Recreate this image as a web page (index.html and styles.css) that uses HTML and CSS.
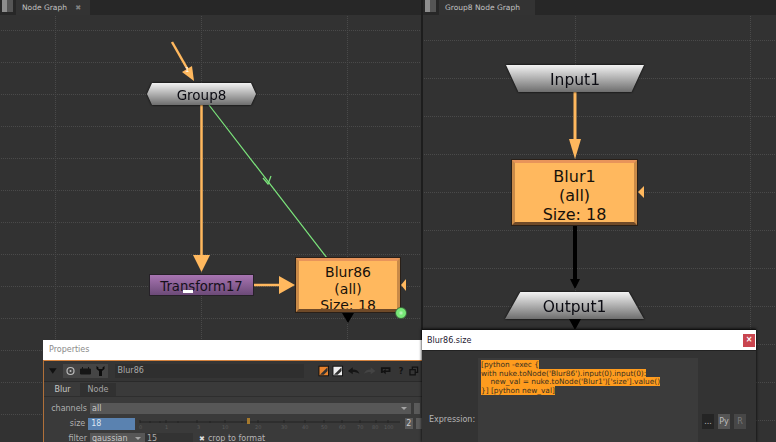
FILE: index.html
```html
<!DOCTYPE html>
<html lang="en">
<head>
  <meta charset="UTF-8">
  <title>Node Graph</title>
  <link rel="stylesheet" href="styles.css">
</head>
<body>
  <div class="app">

    <!-- Left graph -->
    <section class="pane pane-left">
      <div class="tabbar">
        <span class="pane-icon"></span>
        <div class="tab">Node Graph <span class="tab-x">✖</span></div>
      </div>
      <div class="canvas">
        <svg class="wires" viewBox="0 15 421 427">
          <defs>
            <pattern id="grid-left" width="146" height="32" patternUnits="userSpaceOnUse" x="55" y="30">
              <path d="M0 .5H146M.5 0V32" class="grid-line"/>
            </pattern>
          </defs>
          <rect x="0" y="15" width="421" height="427" fill="url(#grid-left)"/>
          <path d="M172 42L188 70" class="wire"/>
          <path d="M194 81L182 72L192 66Z" class="head"/>
          <text x="185" y="72" class="arrow-num">1</text>
          <path d="M201.500 105V258M254 285H282" class="wire"/>
          <path d="M193 255H210L201.500 272Z M279 276V294L295 285Z" class="head"/>
          <path d="M209 105L327 258" class="green"/>
          <path d="M263 178L268 184L271 176" class="green"/>
          <path d="M401 285L406 279V291Z" class="head"/>
          <path d="M342 313H354L348 323Z" class="black"/>
        </svg>
        <div class="node-shape shape-group8"><div class="shape-fill">Group8</div></div>
        <div class="node-flat node-transform">Transform17<span class="cursor-mark"></span></div>
        <div class="node-box node-blur86">Blur86<br>(all)<br>Size: 18</div>
        <div class="port-dot"></div>
      </div>
    </section>

    <!-- Right graph -->
    <section class="pane pane-right">
      <div class="tabbar">
        <span class="pane-icon"></span>
        <div class="tab tab-wide">Group8 Node Graph</div>
      </div>
      <div class="canvas">
        <svg class="wires" viewBox="423 15 353 427">
          <defs>
            <pattern id="grid-right" width="175" height="38" patternUnits="userSpaceOnUse" x="575" y="78">
              <path d="M0 .5H175M.5 0V38" class="grid-line"/>
            </pattern>
          </defs>
          <rect x="423" y="15" width="353" height="427" fill="url(#grid-right)"/>
          <path d="M575 92V142" class="wire wire-thick"/>
          <path d="M569 139H581L575 159Z" class="head"/>
          <path d="M575 225V282" class="wire-black"/>
          <path d="M570 279H580L575 289Z M569 319H581L575 330Z" class="black"/>
          <path d="M638 192L644 186V198Z" class="head"/>
        </svg>
        <div class="node-shape shape-input"><div class="shape-fill">Input1</div></div>
        <div class="node-box node-blur1">Blur1<br>(all)<br>Size: 18</div>
        <div class="node-shape shape-output"><div class="shape-fill">Output1</div></div>
      </div>
    </section>
  </div>

  <!-- Properties window -->
  <div class="win win-props">
    <div class="win-title">Properties</div>
    <div class="props-body">
      <div class="toolbar">
        <svg class="tool-ic" width="10" height="8" viewBox="0 0 10 8"><path d="M1 1H9L5 7Z" fill="#111"/></svg>
        <div class="tool-group">
          <svg width="14" height="14" viewBox="0 0 14 14"><circle cx="7" cy="7" r="3.500" fill="none" stroke="#bbb" stroke-width="1.200"/><circle cx="7" cy="7" r="1" fill="#bbb"/></svg>
          <svg width="14" height="14" viewBox="0 0 14 14"><path d="M2 5H12V10H2ZM4 3V5M10 3V5" fill="#161616" stroke="#161616"/></svg>
          <svg width="14" height="14" viewBox="0 0 14 14"><path d="M3 2V5L5.500 7V12H8.500V7L11 5V2L9 3.500V5H5V3.500Z" fill="#0c0c0c"/></svg>
        </div>
        <div class="name-field">Blur86</div>
        <svg width="12" height="12" viewBox="0 0 12 12"><rect x="1" y="1" width="10" height="10" fill="#e8832e" stroke="#111"/><path d="M2 10L10 2V6L6 10Z" fill="#333"/></svg>
        <svg width="12" height="12" viewBox="0 0 12 12"><rect x="1" y="1" width="10" height="10" fill="#eee" stroke="#111"/><path d="M2 10L10 2V6L6 10Z" fill="#333"/></svg>
        <svg width="14" height="12" viewBox="0 0 14 12"><path d="M1 6L6 2V4.500C10 4.500 12 6 13 9C11 7.500 9 7 6 7V9.500Z" fill="#151515"/></svg>
        <svg width="14" height="12" viewBox="0 0 14 12"><path d="M13 6L8 2V4.500C4 4.500 2 6 1 9C3 7.500 5 7 8 7V9.500Z" fill="#444"/></svg>
        <svg width="14" height="12" viewBox="0 0 14 12"><path d="M2 2H12V7H7V9.500L3.500 6.500L7 4V5.500H10V4H4V8H2Z" fill="#111"/></svg>
        <span class="tool-help">?</span>
        <svg width="10" height="10" viewBox="0 0 10 10"><path d="M1 3.500H6.500V9H1ZM3.500 3V1H9V6.500H7" fill="none" stroke="#111" stroke-width="1.300"/></svg>
      </div>

      <div class="prop-tabs">
        <div class="prop-tab prop-tab-on">Blur</div>
        <div class="prop-tab">Node</div>
      </div>

      <div class="knobs">
        <div class="knob">
          <label>channels</label>
          <div class="dropdown dropdown-long">all<span class="caret"></span></div>
          <div class="mini-btn mini-cut"></div>
        </div>
        <div class="knob">
          <label>size</label>
          <div class="size-input">18</div>
          <svg class="slider" width="263" height="12" viewBox="0 0 263 12">
            <path d="M2 4H262" stroke="#232323"/>
            <path d="M2 2V5M12 3V5M22 3V5M28 2V5M40 3V5M59 2V5M72 3V5M87 2V5M104 3V5M120 2V5M146 2V5M167 2V5M186 2V5M204 2V5M222 2V5M238 2V5M250 2V5" stroke="#232323"/>
            <g class="slider-nums">
              <text x="1" y="11">0</text><text x="27" y="11">1</text><text x="59" y="11">3</text>
              <text x="84" y="11">10</text><text x="117" y="11">20</text><text x="143" y="11">30</text>
              <text x="164" y="11">40</text><text x="183" y="11">50</text><text x="201" y="11">60</text>
              <text x="219" y="11">70</text><text x="234" y="11">80</text><text x="246" y="11">100</text>
            </g>
            <rect x="109" y="0" width="3" height="6" fill="#a5792d"/>
          </svg>
          <div class="mini-btn">2</div>
          <div class="mini-btn mini-cut"></div>
        </div>
        <div class="knob">
          <label>filter</label>
          <div class="dropdown dropdown-short">gaussian<span class="caret"></span></div>
          <div class="num-input">15</div>
          <span class="check">✖</span>
          <span class="check-label">crop to format</span>
        </div>
      </div>
    </div>
  </div>

  <!-- Expression window -->
  <div class="win win-expr">
    <div class="win-title win-title-dark">
      Blur86.size
      <span class="close-btn">×</span>
    </div>
    <div class="expr-body">
      <label class="expr-label">Expression:</label>
      <div class="expr-area">
        <div><span class="sel">[python -exec {</span></div>
        <div><span class="sel">with nuke.toNode('Blur86').input(0).input(0):</span></div>
        <div><span class="sel">    new_val = nuke.toNode('Blur1')['size'].value()</span></div>
        <div><span class="sel">}] [python new_val]</span></div>
      </div>
      <div class="expr-btns">
        <div class="expr-btn expr-btn-dark">...</div>
        <div class="expr-btn">Py</div>
        <div class="expr-btn expr-btn-dim">R</div>
      </div>
    </div>
  </div>
</body>
</html>
```

FILE: styles.css
```css
* {
  box-sizing: border-box;
}

html, body {
  margin: 0;
  height: 100%;
}

body {
  width: 776px;
  height: 442px;
  overflow: hidden;
  position: relative;
  background: #1d1d1d;
  font-family: "DejaVu Sans", sans-serif;
  font-size: 8px;
}

.app {
  display: flex;
  height: 442px;
  gap: 2px;
}

.pane {
  display: flex;
  flex-direction: column;
}

.pane-left {
  width: 421px;
}

.pane-right {
  width: 353px;
}

.tabbar {
  height: 15px;
  display: flex;
  align-items: stretch;
  background: #272727;
  gap: 3px;
}

.pane-icon {
  width: 11px;
  height: 12px;
  margin-left: 2px;
  background: linear-gradient(to right, #8d8d8d 50%, #555 50%);
}

.tab {
  width: 74px;
  padding: 3px 0 0 6px;
  background: #333;
  color: #c2c2c2;
  font-size: 7.500px;
  white-space: nowrap;
}

.tab-x {
  margin-left: 6px;
  font-size: 7px;
  color: #808080;
}

.tab-wide {
  width: 96px;
}

.canvas {
  flex: 1;
  position: relative;
  background: #323232;
}

.wires {
  position: absolute;
  left: 0;
  top: 0;
  width: 100%;
  height: 100%;
}

.grid-line {
  stroke: #4a4a4a;
  stroke-width: 1;
  stroke-dasharray: 1 1;
  fill: none;
}

.wire {
  stroke: #ffb85e;
  stroke-width: 2.500;
  fill: none;
}

.wire-thick {
  stroke-width: 3;
}

.wire-black {
  stroke: #000;
  stroke-width: 4;
  fill: none;
}

.head {
  fill: #ffb85e;
}

.black {
  fill: #000;
}

.green {
  stroke: #7ce67c;
  stroke-width: 1.200;
  fill: none;
}

.arrow-num {
  font-size: 7px;
  fill: #fff;
}

.port-dot {
  position: absolute;
  left: 394.500px;
  top: 292px;
  width: 12px;
  height: 12px;
  border-radius: 50%;
  background: radial-gradient(circle, #c8f5c8 0, #78e878 35%);
  border: 1px solid #3d6a3d;
}

/* nodes */
.node-shape {
  position: absolute;
  filter: drop-shadow(0 0 1px #000);
}

.shape-fill {
  height: 100%;
  padding-top: 2px;
  display: flex;
  align-items: center;
  justify-content: center;
  background: linear-gradient(to bottom, #f2f2f2, #6e6e6e);
  color: #0b0b12;
}

.shape-group8 {
  left: 147px;
  top: 68px;
  width: 109px;
  height: 22px;
  font-size: 13.500px;
}

.shape-group8 .shape-fill {
  clip-path: polygon(5px 0, calc(100% - 5px) 0, 100% 50%, calc(100% - 5px) 100%, 5px 100%, 0 50%);
}

.shape-input {
  left: 83px;
  top: 50px;
  width: 138px;
  height: 27px;
  font-size: 15.500px;
}

.shape-input .shape-fill {
  clip-path: polygon(0 0, 100% 0, 91% 100%, 9% 100%);
}

.shape-output {
  left: 82px;
  top: 277px;
  width: 139px;
  height: 27px;
  font-size: 15.500px;
}

.shape-output .shape-fill {
  clip-path: polygon(11% 0, 89% 0, 100% 100%, 0 100%);
}

.node-flat {
  position: absolute;
  left: 149px;
  top: 259px;
  width: 105px;
  height: 22px;
  padding-top: 2px;
  display: flex;
  align-items: center;
  justify-content: center;
  border: 1px solid #262128;
  background: linear-gradient(to bottom, #a875b2, #6c4a78);
  color: #15101a;
  font-size: 13.200px;
}

.cursor-mark {
  position: absolute;
  left: 33px;
  top: 15px;
  width: 10px;
  height: 3px;
  background: #fff;
}

.node-box {
  position: absolute;
  overflow: hidden;
  text-align: center;
  background: #ffb85e;
  color: #17110a;
  border: 3px solid #ffb85e;
  border-top-color: #e8945a;
  border-bottom-color: #704a28;
  border-left-color: #c98a48;
  border-right-color: #c98a48;
  outline: 1px solid #2a2018;
}

.node-blur86 {
  left: 296px;
  top: 243px;
  width: 104px;
  height: 54px;
  padding-top: 3px;
  font-size: 14px;
  line-height: 16.500px;
}

.node-blur1 {
  left: 89px;
  top: 145px;
  width: 125px;
  height: 65px;
  padding-top: 4px;
  font-size: 16px;
  line-height: 19px;
}

/* floating windows */
.win {
  position: absolute;
  overflow: hidden;
}

.win-title {
  height: 20px;
  padding: 5px 6px;
  background: #fff;
  color: #8a8a8a;
}

.win-props {
  left: 43px;
  top: 340px;
  width: 379px;
  height: 102px;
}

.props-body {
  height: 82px;
  background: #3a3a3a;
  border-top: 1px solid #d5833e;
  border-left: 1px solid #b0703a;
  color: #b4b4b4;
}

.toolbar {
  height: 21px;
  padding: 0 3px 0 4px;
  display: flex;
  align-items: center;
  gap: 3px;
  background: #353535;
  border-bottom: 1px solid #2a2a2a;
}

.tool-group {
  display: flex;
  margin: 0 4px 0 2px;
  background: #454545;
}

.tool-group svg {
  width: 15px;
}

.name-field {
  width: 197px;
  height: 14px;
  margin-right: 11px;
  padding: 2px 3px;
  background: #2f2f2f;
  color: #a9a9a9;
}

.tool-help {
  margin: 0 3px 0 3px;
  color: #111;
  font-weight: bold;
}

.prop-tabs {
  display: flex;
  height: 15px;
  padding: 1px 0 0 3px;
  border-bottom: 1px solid #2e2e2e;
}

.prop-tab {
  width: 31px;
  padding-top: 2px;
  text-align: center;
  background: #313131;
  color: #a5a5a5;
}

.prop-tab-on {
  background: #3a3a3a;
  color: #c8c8c8;
}

.prop-tab + .prop-tab {
  margin-left: 2px;
  width: 36px;
}

.knobs {
  display: flex;
  flex-direction: column;
  gap: 4px;
  padding-top: 6px;
}

.knob {
  display: flex;
  align-items: center;
  gap: 3px;
  height: 11px;
}

.knob label {
  width: 43px;
  text-align: right;
  color: #b0b0b0;
}

.dropdown {
  position: relative;
  height: 11px;
  padding: 0 2px;
  line-height: 11px;
  background: #575757;
  color: #c8c8c8;
}

.dropdown-long {
  width: 321px;
}

.dropdown-short {
  width: 55px;
}

.caret {
  position: absolute;
  right: 4px;
  top: 4px;
  border: 3px solid transparent;
  border-top-color: #a5a5a5;
}

.mini-btn {
  width: 9px;
  height: 11px;
  text-align: center;
  line-height: 11px;
  background: #5a5a5a;
  color: #ccc;
}

.mini-cut {
  width: 6px;
}

.size-input {
  width: 48px;
  height: 12px;
  padding: 1px 3px;
  background: #5a82b0;
  color: #dce6f2;
}

.slider {
  flex: none;
  margin: 0 1px 0 0;
}

.slider-nums text {
  font-size: 5px;
  fill: #5c5c5c;
}

.num-input {
  width: 48px;
  height: 11px;
  padding: 0 2px;
  line-height: 11px;
  background: #333;
  color: #aaa;
  margin-left: -3px;
}

.check {
  margin-left: 3px;
  color: #ddd;
  font-size: 7px;
}

.check-label {
  color: #b5b5b5;
}

.win-expr {
  left: 422px;
  top: 329px;
  width: 334px;
  height: 113px;
  border-top: 1px solid #111;
  box-shadow: 0 0 3px #000;
  background: #333;
}

.win-title-dark {
  height: 21px;
  padding: 6px 5px;
  position: relative;
  color: #1e1830;
  border-bottom: 1px solid #222;
}

.close-btn {
  position: absolute;
  right: 1px;
  top: 4px;
  width: 12px;
  height: 13px;
  background: #c9454f;
  color: #fff;
  text-align: center;
  line-height: 12px;
  font-weight: bold;
}

.expr-body {
  display: flex;
  height: 92px;
  padding: 7px 10px 0 7px;
  background: #333;
  color: #b5b5b5;
}

.expr-label {
  width: 49px;
  padding-top: 57px;
  white-space: nowrap;
}

.expr-area {
  width: 220px;
  height: 85px;
  padding: 3px;
  background: #3b3b3b;
  font-size: 7.400px;
  line-height: 8.700px;
  color: #3a3020;
}

.sel {
  background: #ff9c1e;
  white-space: pre;
}

.expr-btns {
  display: flex;
  gap: 4px;
  margin: 56px 0 0 4px;
}

.expr-btn {
  width: 12px;
  height: 15px;
  text-align: center;
  line-height: 15px;
  background: #555;
  color: #bdbdbd;
}

.expr-btn-dark {
  background: #242424;
}

.expr-btn-dim {
  background: #474747;
  color: #7a7a7a;
}
```
